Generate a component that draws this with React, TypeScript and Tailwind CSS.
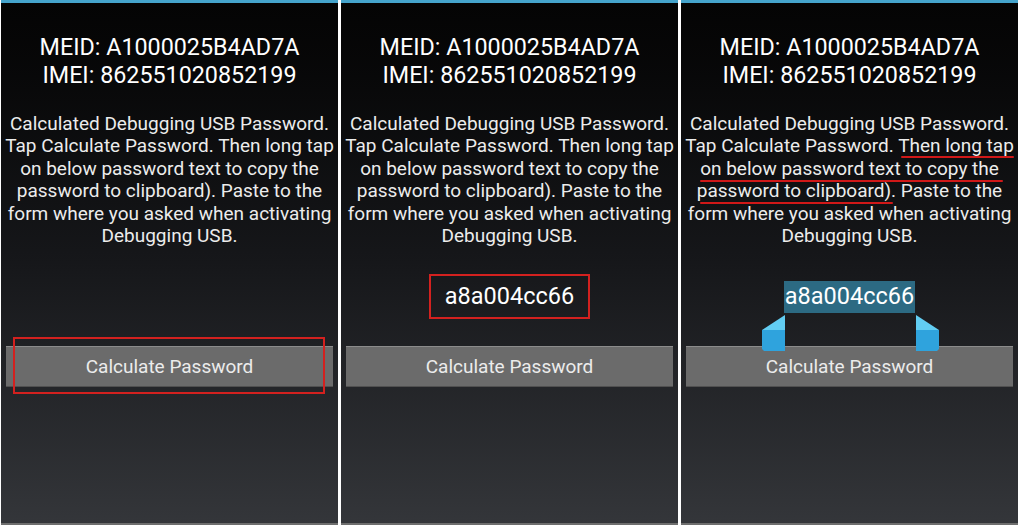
import React from "react";

const FONT = { fontFamily: "Roboto, 'Noto Sans', 'Liberation Sans', sans-serif" };

function Handles() {
  return (
    <>
      <svg className="absolute z-10 left-[81px] top-[315px]" width="24" height="37" viewBox="0 0 24 37">
        <polygon points="23,0 23,15 0,15" fill="#62cdf2" />
        <polygon points="0,15 23,15 23,36 2,36 0,34" fill="#2fa3dd" />
      </svg>
      <svg className="absolute z-10 left-[234px] top-[315px]" width="24" height="37" viewBox="0 0 24 37">
        <polygon points="1,0 1,15 24,15" fill="#62cdf2" />
        <polygon points="1,15 24,15 24,34 22,36 1,36" fill="#2fa3dd" />
      </svg>
    </>
  );
}

function Panel({ mode }: { mode: 1 | 2 | 3 }) {
  return (
    <div
      className="relative flex flex-col w-[337px] h-[525px] bg-gradient-to-b from-[#040404] via-[#16171a] to-[#34363a] text-[#ececec]"
      style={FONT}
    >
      <div className="h-[3px] bg-[#45a4cc]" />
      <div className="pt-[30px] flex flex-col items-center text-[23.3px] leading-[28px] text-white">
        <div>MEID: A1000025B4AD7A</div>
        <div>IMEI: 862551020852199</div>
      </div>
      <div className="mt-[24px] px-[2px] text-center text-[19px] leading-[22.4px]">
        Calculated Debugging USB Password. Tap Calculate Password. Then long tap on below password text to copy the
        password to clipboard). Paste to the form where you asked when activating Debugging USB.
      </div>
      <div className="relative h-[99px] flex items-center justify-center">
        {mode === 2 && (
          <div className="border-2 border-[#d3211f] px-[14px] h-[45px] flex items-center text-[23.5px] text-white">
            a8a004cc66
          </div>
        )}
        {mode === 3 && (
          <div className="bg-[#2c6a83] px-[1px] h-[32px] flex items-center text-[23.5px] text-white">
            a8a004cc66
          </div>
        )}
      </div>
      <div className="relative mx-[5px] h-[41px] bg-[#6b6b6b] border-t border-[#8c8c8c] border-b border-b-[#505050] flex items-center justify-center text-[19px] text-[#ececec]">
        Calculate Password
        {mode === 1 && (
          <div className="absolute left-[7px] right-[8px] top-[-10px] bottom-[-8px] border-2 border-[#d3211f]" />
        )}
      </div>
      {mode === 3 && (
        <>
          <Handles />
          <div className="absolute left-[220px] w-[113px] top-[156px] h-[2px] bg-[#d01818] rounded-full" />
          <div className="absolute left-[19px] w-[303px] top-[180px] h-[2px] bg-[#d01818] rounded-full" />
          <div className="absolute left-[19px] w-[193px] top-[202px] h-[2px] bg-[#d01818] rounded-full" />
        </>
      )}
      <div className="mt-auto h-[2px] bg-[#6e6e6e]" />
    </div>
  );
}

export default function App() {
  return (
    <div className="w-[1019px] h-[525px] bg-white flex gap-[3px] pl-[1px] overflow-hidden">
      <Panel mode={1} />
      <Panel mode={2} />
      <Panel mode={3} />
    </div>
  );
}
